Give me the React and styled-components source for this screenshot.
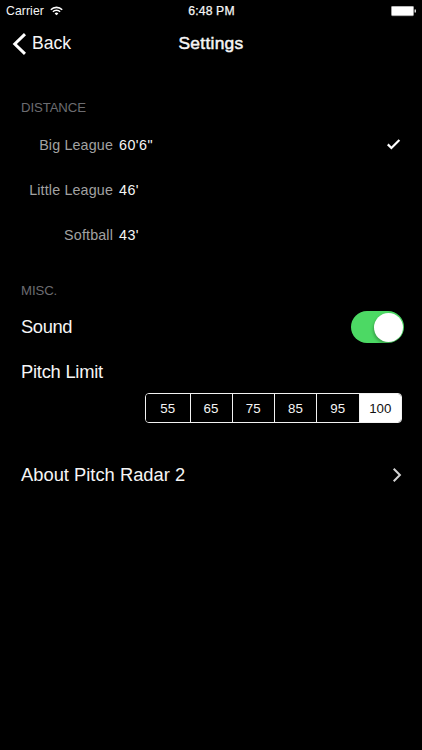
import React from 'react';
import styled, { createGlobalStyle } from 'styled-components';

const GlobalStyle = createGlobalStyle`
  * { box-sizing: border-box; }
  body { margin: 0; background: #000; }
`;

const Screen = styled.main`
  height: 750px;
  background: #000;
  color: #f5f5f5;
  font-family: "Liberation Sans", Arial, sans-serif;
  font-size: 18.35px;
  overflow: hidden;
  white-space: nowrap;
  -webkit-font-smoothing: antialiased;
  svg { display: block; flex: none; }
`;

const StatusBar = styled.header`
  height: 22px;
  display: grid;
  grid-template-columns: 1fr auto 1fr;
  align-items: center;
  padding: 0 5px 0 6px;
  font-size: 12.2px;
`;

const Carrier = styled.div`
  display: flex;
  align-items: center;
  gap: 6px;
  letter-spacing: 0.1px;
`;

const Clock = styled.time`
  letter-spacing: 0.15px;
  -webkit-text-stroke: 0.25px currentColor;
`;

const Battery = styled.div`
  display: flex;
  justify-content: flex-end;
`;

const NavBar = styled.nav`
  height: 43px;
  display: grid;
  grid-template-columns: 1fr auto 1fr;
  align-items: center;
  padding: 0 12px;
  font-size: 17.6px;
`;

const BackButton = styled.button`
  display: flex;
  align-items: center;
  gap: 6px;
  padding: 0;
  border: 0;
  background: none;
  color: inherit;
  font: inherit;
`;

const Title = styled.h1`
  margin: 0;
  font-size: 17.4px;
  font-weight: 400;
  letter-spacing: 0.28px;
  -webkit-text-stroke: 0.5px currentColor;
`;

const Content = styled.div`
  padding: 31px 20px 0 21px;
`;

const SectionTitle = styled.h2`
  margin: 0;
  height: 26px;
  line-height: 23px;
  font-size: 13.2px;
  font-weight: 400;
  letter-spacing: -0.1px;
  color: #6c6c70;
`;

const DistanceList = styled.div`
  padding-top: 0.8px;
`;

const DistanceRow = styled.div`
  height: 44.7px;
  display: grid;
  grid-template-columns: 92px 1fr auto;
  column-gap: 6px;
  align-items: center;
  font-size: 14.3px;
`;

const League = styled.span`
  text-align: right;
  color: #a2a2a2;
  letter-spacing: 0.15px;
`;

const Feet = styled.span`
  letter-spacing: 0.45px;
`;

const SettingRow = styled.div`
  height: ${(p) => p.$height}px;
  display: flex;
  align-items: center;
  justify-content: space-between;
  letter-spacing: ${(p) => p.$tracking || 0}px;
`;

const Switch = styled.button`
  width: 53px;
  height: 32px;
  margin-right: -2px;
  padding: 1.5px;
  display: flex;
  justify-content: flex-end;
  border: 0;
  border-radius: 16px;
  background: #4cd964;
`;

const Knob = styled.span`
  width: 29px;
  height: 29px;
  border-radius: 50%;
  background: #fff;
  box-shadow: -1px 2px 3px rgba(0, 0, 0, 0.25);
`;

const Segments = styled.div`
  width: 257px;
  height: 30px;
  margin: -2px 0 0 auto;
  display: grid;
  grid-template-columns: 44.5px 42px 42.5px 42px 42.5px 1fr;
  border: 1px solid #f2f2f2;
  border-radius: 4px;
  overflow: hidden;
`;

const Segment = styled.button`
  padding: 1px 0 0;
  border: 0;
  border-right: ${(p) => (p.$last ? 0 : '1px solid #f2f2f2')};
  background: ${(p) => (p.$selected ? '#fff' : '#000')};
  color: ${(p) => (p.$selected ? '#111' : '#f5f5f5')};
  font: inherit;
  font-size: 13.3px;
`;

const MiscGroup = styled.section`
  padding-top: 22.1px;
`;

const distances = [
  { name: 'Big League', feet: '60\'6"', selected: true },
  { name: 'Little League', feet: "46'" },
  { name: 'Softball', feet: "43'" },
];

const limits = [55, 65, 75, 85, 95, 100];

const WifiIcon = () => (
  <svg width="13" height="10" viewBox="0 0 13 10" fill="none" stroke="#fff" strokeWidth="1.6">
    <path d="M.8 3.7a8.1 8.1 0 0 1 11.4 0" />
    <path d="M2.9 5.8a5.1 5.1 0 0 1 7.2 0" />
    <path d="M6.5 9.3 4.6 7.4a2.7 2.7 0 0 1 3.8 0Z" fill="#fff" stroke="none" />
  </svg>
);

const BatteryIcon = () => (
  <svg width="26" height="11" viewBox="0 0 26 11">
    <rect x=".5" y=".2" width="22" height="9.5" rx="1" fill="#fff" stroke="#aaa" strokeWidth=".7" />
    <path d="M23.5 3.5h1.5v3h-1.5z" fill="#d8d8d8" />
  </svg>
);

const BackIcon = () => (
  <svg width="14" height="22" viewBox="0 0 14 22" fill="none" stroke="#fff" strokeWidth="3">
    <path d="M13 1.2 2.8 11 13 20.8" />
  </svg>
);

const CheckIcon = () => (
  <svg width="16" height="12" viewBox="0 0 16 12" fill="none" stroke="#fff" strokeWidth="2.2">
    <path d="m1.8 5.4 3.6 3.6 8-8" />
  </svg>
);

const ChevronIcon = () => (
  <svg width="10" height="14" viewBox="0 0 10 14" fill="none" stroke="#d2d2d2" strokeWidth="2">
    <path d="m1.7.8 6.2 6.2-6.2 6.2" />
  </svg>
);

export default function App() {
  return (
    <Screen>
      <GlobalStyle />
      <StatusBar>
        <Carrier>Carrier <WifiIcon /></Carrier>
        <Clock>6:48 PM</Clock>
        <Battery><BatteryIcon /></Battery>
      </StatusBar>
      <NavBar>
        <BackButton><BackIcon />Back</BackButton>
        <Title>Settings</Title>
      </NavBar>
      <Content>
        <section>
          <SectionTitle>DISTANCE</SectionTitle>
          <DistanceList>
            {distances.map((d) => (
              <DistanceRow key={d.name}>
                <League>{d.name}</League>
                <Feet>{d.feet}</Feet>
                {d.selected && <CheckIcon />}
              </DistanceRow>
            ))}
          </DistanceList>
        </section>
        <MiscGroup>
          <SectionTitle>MISC.</SectionTitle>
          <SettingRow $height={45} $tracking={-0.4}>
            Sound
            <Switch role="switch" aria-checked="true" aria-label="Sound"><Knob /></Switch>
          </SettingRow>
          <SettingRow $height={45} $tracking={-0.25}>Pitch Limit</SettingRow>
          <Segments>
            {limits.map((n, i) => (
              <Segment key={n} $selected={n === 100} $last={i === limits.length - 1}>{n}</Segment>
            ))}
          </Segments>
        </MiscGroup>
        <SettingRow $height={104}>
          About Pitch Radar 2
          <ChevronIcon />
        </SettingRow>
      </Content>
    </Screen>
  );
}
